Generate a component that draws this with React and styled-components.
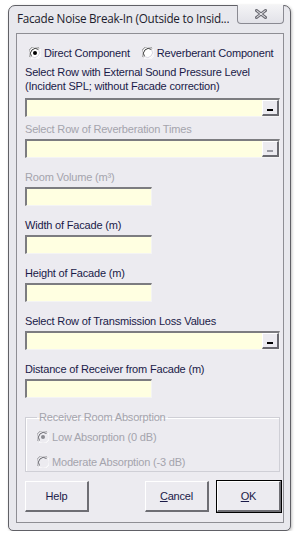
import React from 'react'
import styled, { createGlobalStyle } from 'styled-components'

const Global = createGlobalStyle`
  html, body { margin: 0; background: #ffffff; }
  body { font-family: "Liberation Sans", Arial, sans-serif; }
`

const Window = styled.div`
  margin: 5px 0 0 8px;
  width: 283px;
  height: 526px;
  box-sizing: border-box;
  border: 1px solid #606066;
  border-radius: 7px 7px 5px 5px;
  background: #e8e8ed;
  box-shadow: 1px 1px 3px rgba(0, 0, 0, 0.25);
  padding: 0 6px 7px 7px;
  display: flex;
  flex-direction: column;
`

const TitleBar = styled.div`
  height: 27px;
  display: flex;
  justify-content: space-between;
  align-items: flex-start;
`

const Title = styled.div`
  font-family: "Open Sans", "Liberation Sans", sans-serif;
  font-size: 11.7px;
  letter-spacing: -0.25px;
  color: #1c1c2c;
  line-height: 24px;
  padding-left: 1px;
  white-space: nowrap;
  overflow: hidden;
  min-width: 0;
`

const CloseButton = styled.div`
  flex-shrink: 0;
  width: 47px;
  height: 19px;
  margin-top: -1px;
  box-sizing: border-box;
  border: 1px solid #8a8a92;
  border-top: none;
  border-radius: 0 0 4px 4px;
  background: linear-gradient(#f4f4f6, #e2e2e8);
  display: flex;
  align-items: center;
  justify-content: center;
`

const Client = styled.div`
  flex: 1;
  border: 1px solid #8e8e94;
  background: #ecebf0;
  padding: 12px 3px 0 8px;
  display: flex;
  flex-direction: column;
  font-size: 11px;
  letter-spacing: -0.18px;
  color: #1a1a48;
`

const RadioRow = styled.div`
  display: flex;
  align-items: center;
  height: 14px;
  margin-top: ${p => p.$mt || 0}px;
  color: ${p => (p.$disabled ? '#a4a4ad' : '#1a1a48')};
`

const RadioItem = styled.label`
  display: flex;
  align-items: center;
  gap: 3px;
  margin-left: ${p => p.$ml || 0}px;
  white-space: nowrap;
`

const Caption = styled.div`
  line-height: 14px;
  margin-top: ${p => p.$mt || 0}px;
  color: ${p => (p.$disabled ? '#a4a4ad' : '#1a1a48')};
  white-space: nowrap;
`

const Field = styled.div`
  width: ${p => (p.$wide ? 255 : 127)}px;
  height: 19px;
  margin-top: ${p => p.$mt || 0}px;
  box-sizing: border-box;
  background: #ffffe1;
  border-top: 2px solid #7c7c80;
  border-left: 2px solid #7c7c80;
  border-right: 1px solid #f4f4f4;
  border-bottom: 1px solid #f4f4f4;
  display: flex;
  justify-content: flex-end;
`

const Ellipsis = styled.div`
  width: 17px;
  height: 16px;
  box-sizing: border-box;
  background: #ecebf0;
  border-top: 1px solid #ffffff;
  border-left: 1px solid #ffffff;
  border-right: 2px solid #6a6a70;
  border-bottom: 2px solid #6a6a70;
  display: flex;
  align-items: flex-end;
  justify-content: center;
  padding-bottom: 3px;
  &::after {
    content: '';
    width: 6px;
    height: 2px;
    background: ${p => (p.$disabled ? '#9a9aa2' : '#000000')};
  }
`

const Group = styled.fieldset`
  margin: 12px 0 0 0;
  width: 255px;
  box-sizing: border-box;
  border: 1px solid #cfcfd6;
  box-shadow: inset 1px 1px 0 #ffffff;
  padding: 0 0 2px 11px;
`

const Legend = styled.legend`
  padding: 0 2px;
  line-height: 14px;
  color: #a4a4ad;
`

const ButtonRow = styled.div`
  width: 256px;
  margin-top: 9px;
  display: flex;
  gap: 8px;
`

const Button = styled.div`
  width: 64px;
  height: 31px;
  box-sizing: border-box;
  margin-right: ${p => p.$mr || 0}px;
  background: #ecebf0;
  border-top: 1px solid #ffffff;
  border-left: 1px solid #ffffff;
  border-right: 2px solid #6e6e74;
  border-bottom: 2px solid #6e6e74;
  outline: ${p => (p.$default ? '1px solid #000000' : 'none')};
  display: flex;
  align-items: center;
  justify-content: center;
  color: #1a1a48;
  u { text-decoration: underline; }
`

const Radio = ({ checked }) => (
  <svg width="12" height="12" viewBox="0 0 12 12">
    <circle cx="6" cy="6" r="5.5" fill="#ffffff" />
    <path d="M1.5 10.5 A6 6 0 0 1 10.5 1.5" stroke="#8a8a8a" strokeWidth="1" fill="none" />
    <path d="M2.5 9.5 A5 5 0 0 1 9.5 2.5" stroke="#3a3a3a" strokeWidth="1" fill="none" />
    <path d="M10.5 1.5 A6 6 0 0 1 1.5 10.5" stroke="#ffffff" strokeWidth="1" fill="none" />
    <path d="M9.5 2.5 A5 5 0 0 1 2.5 9.5" stroke="#d8d6e0" strokeWidth="1" fill="none" />
    {checked && <circle cx="6" cy="6" r="2" fill="#000000" />}
  </svg>
)

const DimRadio = ({ checked }) => (
  <svg width="12" height="12" viewBox="0 0 12 12">
    <circle cx="6" cy="6" r="5.5" fill="#ecebf0" />
    <path d="M1.5 10.5 A6 6 0 0 1 10.5 1.5" stroke="#9a9a9e" strokeWidth="1" fill="none" />
    <path d="M2.5 9.5 A5 5 0 0 1 9.5 2.5" stroke="#6a6a70" strokeWidth="1" fill="none" />
    <path d="M10.5 1.5 A6 6 0 0 1 1.5 10.5" stroke="#ffffff" strokeWidth="1" fill="none" />
    {checked && <circle cx="6" cy="6" r="2" fill="#8a8a90" />}
  </svg>
)

const CloseIcon = () => (
  <svg width="12" height="10" viewBox="0 0 12 10">
    <path d="M1.5 1.5 L10.5 8.5 M10.5 1.5 L1.5 8.5" stroke="#6e6e76" strokeWidth="3" strokeLinecap="square" />
    <path d="M1.5 1.5 L10.5 8.5 M10.5 1.5 L1.5 8.5" stroke="#eeeef2" strokeWidth="1" />
  </svg>
)

const App = () => {
  return (
    <>
      <Global />
      <Window>
        <TitleBar>
          <Title>Facade Noise Break-In (Outside to Insid...</Title>
          <CloseButton>
            <CloseIcon />
          </CloseButton>
        </TitleBar>
        <Client>
          <RadioRow>
            <RadioItem $ml={4}>
              <Radio checked />
              Direct Component
            </RadioItem>
            <RadioItem $ml={12}>
              <Radio />
              Reverberant Component
            </RadioItem>
          </RadioRow>

          <Caption $mt={5}>
            Select Row with External Sound Pressure Level
            <br />
            (Incident SPL; without Facade correction)
          </Caption>
          <Field $wide $mt={5}>
            <Ellipsis />
          </Field>

          <Caption $mt={5} $disabled>Select Row of Reverberation Times</Caption>
          <Field $wide $mt={3}>
            <Ellipsis $disabled />
          </Field>

          <Caption $mt={12} $disabled>Room Volume (m³)</Caption>
          <Field $mt={3} />

          <Caption $mt={12}>Width of Facade (m)</Caption>
          <Field $mt={3} />

          <Caption $mt={12}>Height of Facade (m)</Caption>
          <Field $mt={3} />

          <Caption $mt={12}>Select Row of Transmission Loss Values</Caption>
          <Field $wide $mt={3}>
            <Ellipsis />
          </Field>

          <Caption $mt={12}>Distance of Receiver from Facade (m)</Caption>
          <Field $mt={3} />

          <Group>
            <Legend>Receiver Room Absorption</Legend>
            <RadioRow $mt={6} $disabled>
              <RadioItem>
                <DimRadio checked />
                Low Absorption (0 dB)
              </RadioItem>
            </RadioRow>
            <RadioRow $mt={11} $disabled>
              <RadioItem>
                <DimRadio />
                Moderate Absorption (-3 dB)
              </RadioItem>
            </RadioRow>
          </Group>

          <ButtonRow>
            <Button $mr={48}>Help</Button>
            <Button>
              <span><u>C</u>ancel</span>
            </Button>
            <Button $default>
              <span><u>O</u>K</span>
            </Button>
          </ButtonRow>
        </Client>
      </Window>
    </>
  )
}

export default App
